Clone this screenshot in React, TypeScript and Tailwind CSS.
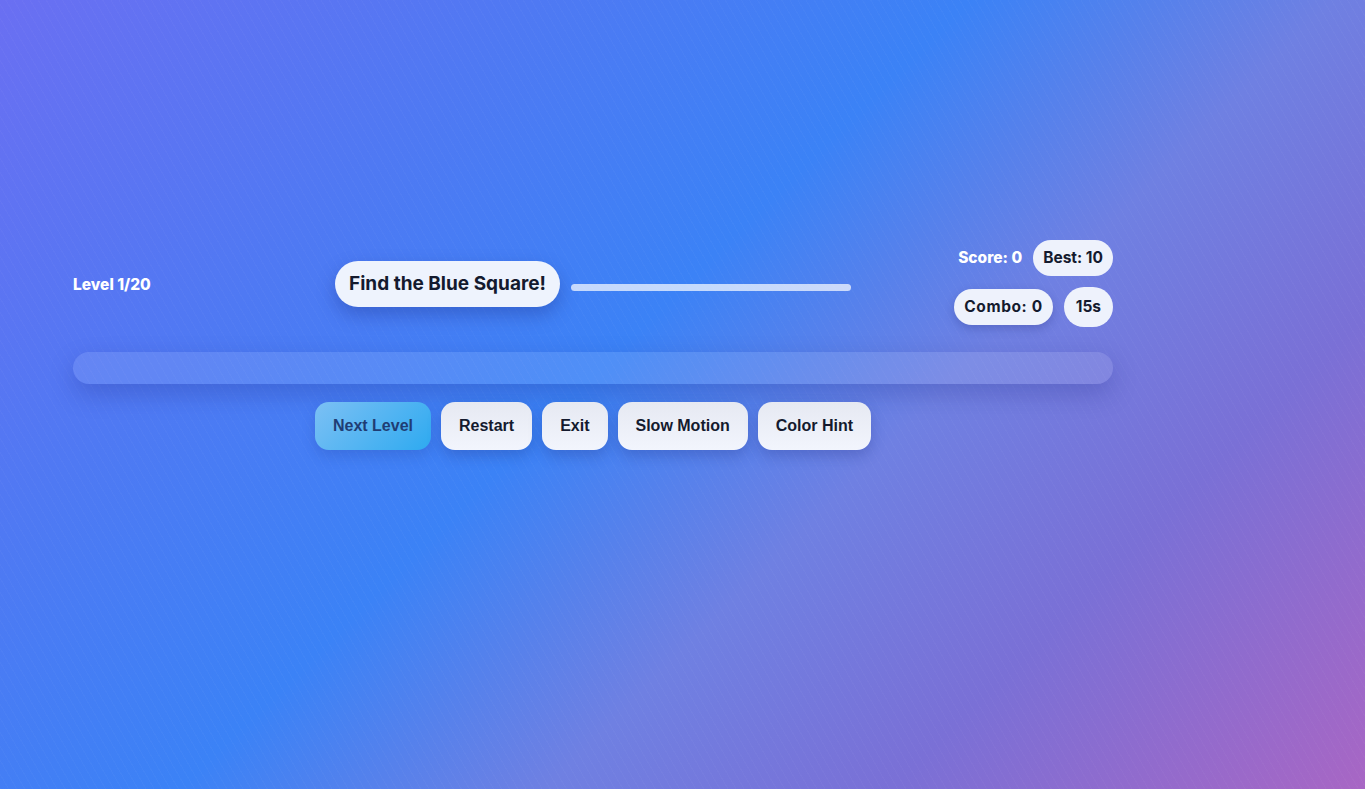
import React from "react";

const pop = { fontFamily: "Inter, 'Open Sans', sans-serif" };
const arial = { fontFamily: "'Liberation Sans', Arial, sans-serif" };

export default function App() {
  return (
    <div className="relative w-full h-[789px] overflow-hidden bg-[linear-gradient(135deg,#6a6ff2_0%,#4f79f3_25%,#3b82f6_45%,#6f80e2_62%,#7a70d6_78%,#a866c4_100%)]">
      <div className="pointer-events-none absolute inset-0 bg-[repeating-linear-gradient(60deg,rgba(255,255,255,0.025)_0px,rgba(255,255,255,0.025)_1px,transparent_1px,transparent_7px)]" />
      <div className="relative ml-[73px] w-[1040px] pt-[240px]">
        {/* Header */}
        <div className="grid grid-cols-[1fr_auto_1fr] items-center">
          <div className="text-white font-extrabold text-[15.5px] mt-[3px]" style={pop}>
            Level 1/20
          </div>
          <div className="flex items-center gap-[11px] mt-[1px]">
            <div
              className="h-[46px] px-[14px] flex items-center rounded-full bg-[#eef3fd] text-[#141a2e] font-bold text-[19px] shadow-[0_8px_18px_rgba(30,50,140,0.35)]"
              style={pop}
            >
              Find the Blue Square!
            </div>
            <div className="w-[280px] h-[7px] mt-[6px] rounded-full bg-white/70" />
          </div>
          <div className="flex flex-col items-end gap-[11px]" style={pop}>
            <div className="flex items-center gap-[11px]">
              <span className="text-white font-extrabold text-[15.5px]">Score: 0</span>
              <span className="h-9 px-[10px] flex items-center rounded-full bg-[#eef2fc] text-[#141a2e] font-bold text-[15.5px]">
                Best: 10
              </span>
            </div>
            <div className="flex items-center gap-[11px]">
              <span className="h-9 px-[10px] flex items-center rounded-full bg-[#eef2fc] text-[#141a2e] font-bold text-[15.5px] tracking-[0.6px] shadow-[0_4px_10px_rgba(30,40,120,0.25)]">
                Combo: 0
              </span>
              <span className="h-10 px-3 flex items-center rounded-full bg-[#eef2fc] text-[#141a2e] font-bold text-[15.5px]">
                15s
              </span>
            </div>
          </div>
        </div>

        {/* Track bar */}
        <div className="mt-[25px] h-8 rounded-full bg-white/10 shadow-[0_10px_24px_rgba(30,40,130,0.25)]" />

        {/* Buttons */}
        <div className="mt-[18px] flex justify-center gap-[10px]" style={arial}>
          <button className="h-12 px-[18px] rounded-[14px] bg-[linear-gradient(135deg,#7cc0f4,#2eaaf0)] text-[#1f3d74] font-bold text-[16px] shadow-[0_6px_14px_rgba(30,50,140,0.2)]">
            Next Level
          </button>
          {["Restart", "Exit", "Slow Motion", "Color Hint"].map((t) => (
            <button
              key={t}
              className="h-12 px-[18px] rounded-[14px] bg-[linear-gradient(180deg,#e6e9f2,#f2f5fd)] text-[#141a2e] font-bold text-[16px] shadow-[0_6px_14px_rgba(30,40,120,0.25)]"
            >
              {t}
            </button>
          ))}
        </div>
      </div>
    </div>
  );
}
